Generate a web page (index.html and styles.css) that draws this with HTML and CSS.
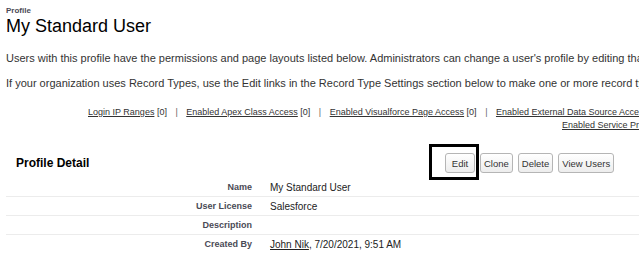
FILE: index.html
```html
<!DOCTYPE html>
<html lang="en">
<head>
    <meta charset="UTF-8">
    <meta name="viewport" content="width=device-width, initial-scale=1.0">
    <title>My Standard User - Profile</title>
    <link rel="stylesheet" href="styles.css">
</head>
<body>
    <div class="page">
        <div class="page-header">
            <div class="crumb">Profile</div>
            <h1 class="title">My Standard User</h1>
        </div>

        <p class="intro">Users with this profile have the permissions and page layouts listed below. Administrators can change a user's profile by editing that user's personal information.</p>
        <p class="intro second">If your organization uses Record Types, use the Edit links in the Record Type Settings section below to make one or more record types available to users with this profile.</p>

        <div class="related-links">
            <div class="links-line first">
                <a href="#">Login IP Ranges</a> [0]<span class="sep">|</span><a href="#">Enabled Apex Class Access</a> [0]<span class="sep">|</span><a href="#">Enabled Visualforce Page Access</a> [0]<span class="sep">|</span><a href="#">Enabled External Data Source Access</a> [0]
            </div>
            <div class="links-line second">
                <a href="#">Enabled Service Presence Status Access</a> [0]
            </div>
        </div>

        <div class="block">
            <div class="block-header">
                <h2 class="block-title">Profile Detail</h2>
                <div class="buttons">
                    <span class="highlight"><button class="btn edit">Edit</button></span>
                    <button class="btn">Clone</button>
                    <button class="btn">Delete</button>
                    <button class="btn">View Users</button>
                </div>
            </div>

            <div class="detail-list">
                <div class="row">
                    <div class="label">Name</div>
                    <div class="value">My Standard User</div>
                </div>
                <div class="row">
                    <div class="label">User License</div>
                    <div class="value">Salesforce</div>
                </div>
                <div class="row">
                    <div class="label">Description</div>
                    <div class="value"></div>
                </div>
                <div class="row last">
                    <div class="label">Created By</div>
                    <div class="value"><a href="#">John Nik</a>, 7/20/2021, 9:51 AM</div>
                </div>
            </div>
        </div>
    </div>
</body>
</html>
```

FILE: styles.css
```css
body {
    margin: 0;
    overflow: hidden;
    background: #fff;
    font-family: "Liberation Sans", Arial, sans-serif;
    color: #333;
}

.page {
    width: 900px;
    padding: 6px 0 0 6px;
}

.crumb {
    font-size: 8px;
    font-weight: bold;
    line-height: 10px;
    color: #4a4a56;
}

.title {
    margin: 0;
    font-size: 18px;
    font-weight: normal;
    line-height: 20px;
    color: #000;
}

.intro {
    margin: 16px 0 0 0;
    font-size: 11px;
    line-height: 12px;
    white-space: nowrap;
    color: #333;
}

.intro.second {
    margin-top: 13px;
}

.related-links {
    margin-top: 17px;
    font-size: 9px;
    line-height: 13px;
    white-space: nowrap;
    color: #333;
}

.related-links a {
    color: #333;
}

.links-line.first {
    padding-left: 82px;
}

.links-line.second {
    padding-left: 556px;
}

.sep {
    padding: 0 8.5px;
    color: #666;
}

.block {
    margin-top: 17px;
}

.block-header {
    display: flex;
    align-items: center;
    height: 28px;
}

.block-title {
    width: 423px;
    margin: 0;
    padding-left: 10px;
    box-sizing: border-box;
    font-size: 12px;
    font-weight: bold;
    color: #000;
}

.buttons {
    display: flex;
    gap: 5px;
    padding-left: 16px;
}

.highlight {
    position: relative;
    display: flex;
}

.highlight::after {
    content: "";
    position: absolute;
    top: -9px;
    left: -16px;
    right: -4px;
    bottom: -7px;
    border: 3px solid #000;
}

.btn {
    height: 20px;
    padding: 0 3px;
    font-family: "Liberation Sans", Arial, sans-serif;
    font-size: 9.5px;
    color: #333;
    background: linear-gradient(#fff, #ededed);
    border: 1px solid #b5b5b5;
    border-radius: 3px;
}

.btn.edit {
    min-width: 30px;
}

.detail-list {
    margin-top: 1px;
}

.row {
    display: grid;
    grid-template-columns: 246px 1fr;
    column-gap: 18px;
    height: 18px;
    align-items: center;
    border-bottom: 1px solid #ececec;
}

.row.last {
    border-bottom: none;
}

.label {
    text-align: right;
    font-size: 9px;
    font-weight: bold;
    color: #4a4a56;
}

.value {
    font-size: 10px;
    color: #222;
}

.value a {
    color: #222;
}
```
